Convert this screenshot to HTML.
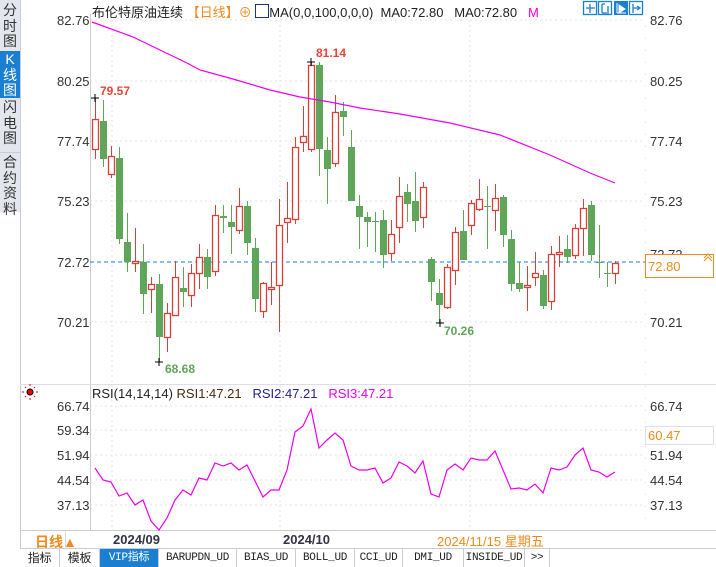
<!DOCTYPE html>
<html><head><meta charset="utf-8"><style>
html,body{margin:0;padding:0;background:#fff;}
body{width:716px;height:566px;position:relative;overflow:hidden;font-family:"Liberation Sans","Noto Sans CJK SC",sans-serif;}
.side{position:absolute;left:0;top:0;width:20px;height:212px;background:#e3e6ec;border-right:1px solid #c8ccd4;}
.side div{position:absolute;left:0;width:20px;text-align:center;font-size:14px;line-height:15.5px;color:#333;}
.side .sel{background:#1a7fd0;color:#fff;}
.lbl{position:absolute;font-size:13px;color:#333;}
.tabs{position:absolute;left:20px;top:548px;height:18px;width:696px;border-top:1px solid #c8ccd4;font-size:11px;}
.tabs span{position:absolute;top:0;height:18px;line-height:18px;text-align:center;border-right:1px solid #c8ccd4;color:#222;font-family:"Liberation Mono","Noto Sans CJK SC",monospace;letter-spacing:-0.3px;}
</style></head><body>
<div class="side">
<div style="top:3px">分<br>时<br>图</div>
<div class="sel" style="top:51px;height:46px;padding-top:1px">K<br>线<br>图</div>
<div style="top:100px">闪<br>电<br>图</div>
<div style="top:152px;border-top:1px solid #c8ccd4;padding-top:2px">合<br>约<br>资<br>料</div>
</div>
<div style="position:absolute;left:20px;top:212px;width:0;height:336px;border-left:1px solid #c8ccd4"></div>
<svg id="s" width="716" height="566" style="position:absolute;left:0;top:0" xmlns="http://www.w3.org/2000/svg">
<g stroke="#e4e4e4" stroke-dasharray="2,3">
<line x1="90" y1="20" x2="645" y2="20"/><line x1="90" y1="81" x2="645" y2="81"/><line x1="90" y1="141" x2="645" y2="141"/><line x1="90" y1="201" x2="645" y2="201"/><line x1="90" y1="322" x2="645" y2="322"/>
<line x1="90" y1="406" x2="645" y2="406"/><line x1="90" y1="430" x2="645" y2="430"/><line x1="90" y1="455" x2="645" y2="455"/><line x1="90" y1="480" x2="645" y2="480"/><line x1="90" y1="505" x2="645" y2="505"/>
<line x1="112" y1="20" x2="112" y2="530"/><line x1="280" y1="20" x2="280" y2="530"/><line x1="470" y1="20" x2="470" y2="530"/>
</g>
<line x1="90.5" y1="14" x2="90.5" y2="530" stroke="#ccc"/>
<line x1="645.5" y1="14" x2="645.5" y2="530" stroke="#ddd" stroke-dasharray="1,11"/>
<line x1="20" y1="384.5" x2="716" y2="384.5" stroke="#dde"/>
<line x1="20" y1="530.5" x2="716" y2="530.5" stroke="#ccc"/>
<line x1="90" y1="262" x2="645" y2="262" stroke="#1a7fe0" stroke-dasharray="4,3"/>
<g id="c"></g>
<polyline fill="none" stroke="#ee00ee" stroke-width="1.2" points="92,22 133,37 160,50 187,63 200,70 233,79 270,90 300,97 330,102 360,108 400,114 450,123 500,135 550,155 590,173 615,183"/>
<polyline id="rsi" fill="none" stroke="#ee00ee" stroke-width="1.2"/>
<g stroke="#000" stroke-width="1"><path d="M91 98h8M95 94v8M155 362h8M159 358v8M307 62h8M311 58v8M436 323h8M440 319v8"/></g>
<g font-size="12" font-weight="bold" font-family="Liberation Sans">
<text x="100" y="95" fill="#e0483a">79.57</text><text x="316" y="57" fill="#e0483a">81.14</text>
<text x="165" y="373" fill="#5fa55a">68.68</text><text x="444" y="335" fill="#5fa55a">70.26</text></g>
<g fill="none" stroke="#1a7fd0" stroke-width="1.3">
<rect x="583.5" y="1.5" width="13" height="13"/><rect x="598.5" y="1.5" width="13" height="13"/><rect x="629.5" y="1.5" width="13" height="13"/>
<path d="M590 4v9M586 8h9M602 4v9M602 4h3M602 13h7M608 6v6M633 4v9M633 8h7M637 6l3 2-3 2"/></g>
<rect x="614" y="1" width="14" height="14" fill="#1a7fd0"/><path d="M617 3v10M617 13h9M619 5l6 4-6 4z" stroke="#fff" fill="#fff"/>
<text x="650" y="259" font-size="13" fill="#333">72.72</text>
<rect x="645.5" y="254.5" width="68" height="23" fill="#fff" stroke="#f08a1c"/>
<text x="648" y="271" font-size="13" fill="#f08a1c">72.80</text>
<path d="M704 258l4-4 4 4M704 261l4-4 4 4" stroke="#f08a1c" fill="none"/>
<rect x="645.5" y="426.5" width="68" height="18" fill="#fff" stroke="#dde"/>
<text x="648" y="440" font-size="13" fill="#f08a1c">60.47</text>
<circle cx="30" cy="392" r="3" fill="#e00" stroke="#000"/><path d="M24 392h-2M36 392h2M30 386v-2M30 398v2M26 388l-1-1M34 388l1-1M26 396l-1 1M34 396l1 1" stroke="#e00"/>
</svg>
<div class="lbl" style="left:92px;top:2px;color:#222">布伦特原油连续 <span style="color:#f08a1c">【日线】</span><span style="color:#f08a1c">⊕</span> <span style="display:inline-block;width:12px;height:12px;border:1px solid #1a3080;vertical-align:-1px"></span>MA(0,0,100,0,0,0) &nbsp;MA0:72.80 &nbsp;&nbsp;MA0:72.80 &nbsp;&nbsp;<span style="color:#ee00ee">M</span></div>
<div class="lbl" style="left:57px;top:13px">82.76</div><div class="lbl" style="left:57px;top:74px">80.25</div><div class="lbl" style="left:57px;top:134px">77.74</div><div class="lbl" style="left:57px;top:194px">75.23</div><div class="lbl" style="left:57px;top:255px">72.72</div><div class="lbl" style="left:57px;top:315px">70.21</div>
<div class="lbl" style="left:650px;top:13px">82.76</div><div class="lbl" style="left:650px;top:74px">80.25</div><div class="lbl" style="left:650px;top:134px">77.74</div><div class="lbl" style="left:650px;top:194px">75.23</div><div class="lbl" style="left:650px;top:315px">70.21</div>
<div class="lbl" style="left:92px;top:386px;color:#222">RSI(14,14,14) <span style="color:#4a2a10">RSI1:47.21</span> &nbsp;&nbsp;<span style="color:#222299">RSI2:47.21</span> &nbsp;&nbsp;<span style="color:#ee00ee">RSI3:47.21</span></div>
<div class="lbl" style="left:57px;top:399px">66.74</div><div class="lbl" style="left:57px;top:423px">59.34</div><div class="lbl" style="left:57px;top:448px">51.94</div><div class="lbl" style="left:57px;top:473px">44.54</div><div class="lbl" style="left:57px;top:498px">37.13</div>
<div class="lbl" style="left:650px;top:399px">66.74</div><div class="lbl" style="left:650px;top:448px">51.94</div><div class="lbl" style="left:650px;top:473px">44.54</div><div class="lbl" style="left:650px;top:498px">37.13</div>
<div class="lbl" style="left:35px;top:532px;color:#f08a1c;font-weight:bold;font-size:14px">日线▲</div>
<div style="position:absolute;left:65px;top:531px;width:0;height:17px;border-left:1px solid #ddd"></div>
<div class="lbl" style="left:113px;top:532px;font-weight:bold;color:#334">2024/09</div>
<div class="lbl" style="left:283px;top:532px;font-weight:bold;color:#334">2024/10</div>
<div class="lbl" style="left:437px;top:531px;color:#f08a1c;font-size:13px">2024/11/15 星期五</div>
<div class="tabs">
<span style="left:0;width:39px;font-family:'Noto Sans CJK SC',sans-serif;font-size:12px">指标</span>
<span style="left:40px;width:39px;font-family:'Noto Sans CJK SC',sans-serif;font-size:12px">模板</span>
<span style="left:80px;width:58px;background:#1a7fd0;color:#fff">VIP指标</span>
<span style="left:139px;width:77px">BARUPDN_UD</span>
<span style="left:217px;width:58px">BIAS_UD</span>
<span style="left:276px;width:58px">BOLL_UD</span>
<span style="left:335px;width:47px">CCI_UD</span>
<span style="left:383px;width:60px">DMI_UD</span>
<span style="left:444px;width:60px">INSIDE_UD</span>
<span style="left:505px;width:24px">&gt;&gt;</span>
</div>
<script>
var C=[[95,'r',119,149,98,159],[103,'g',121,159,100,167],[111,'r',156,174,146,178],[119,'g',158,239,147,244],[127,'g',242,262,213,272],[135,'r',261,263,228,272],[143,'g',262,294,244,314],[151,'r',284,289,277,313],[159,'g',284,337,274,362],[167,'r',313,337,303,352],[175,'r',277,315,261,315],[183,'g',288,292,267,307],[191,'r',273,295,264,307],[199,'r',257,273,244,289],[207,'g',257,277,249,289],[215,'r',215,271,205,276],[223,'g',216,218,205,233],[231,'g',222,227,205,254],[239,'r',206,230,188,234],[247,'g',206,243,201,255],[255,'g',248,299,238,312],[263,'r',283,311,282,318],[271,'r',287,289,262,305],[279,'r',225,285,199,332],[287,'r',218,222,182,243],[295,'r',147,219,137,224],[303,'r',136,142,106,152],[311,'r',65,149,62,152],[319,'g',65,149,62,176],[327,'g',150,169,137,204],[335,'r',112,163,95,167],[343,'g',111,117,102,136],[351,'g',147,201,130,201],[359,'g',206,217,195,249],[367,'g',217,222,212,247],[375,'g',221,222,212,252],[383,'g',220,255,210,268],[391,'r',234,253,220,261],[399,'r',196,227,177,243],[407,'g',192,204,184,222],[415,'g',201,221,172,232],[423,'r',187,217,182,228],[431,'g',259,282,257,301],[439,'g',293,305,279,323],[447,'r',267,307,264,309],[455,'r',232,270,227,285],[463,'g',231,260,210,260],[471,'r',203,225,200,235],[479,'r',199,209,179,211],[487,'g',206,207,186,249],[495,'r',198,210,184,231],[503,'g',197,235,195,247],[511,'g',239,284,230,291],[519,'g',283,289,262,292],[527,'r',285,287,266,311],[535,'r',273,277,252,286],[543,'g',275,306,270,309],[551,'r',254,301,246,310],[559,'r',252,254,236,267],[567,'g',249,257,235,263],[575,'r',228,255,224,259],[583,'r',208,228,199,256],[591,'g',205,255,201,261],[599,'g',262,263,225,278],[607,'g',273,274,262,287],[615,'r',263,273,261,284]];
var h='';C.forEach(function(c){var col=c[1]=='r'?'#d9403a':'#5fa55a',x=c[0];
h+='<line x1="'+(x+.5)+'" y1="'+c[4]+'" x2="'+(x+.5)+'" y2="'+c[2]+'" stroke="'+col+'"/>';
h+='<line x1="'+(x+.5)+'" y1="'+c[3]+'" x2="'+(x+.5)+'" y2="'+c[5]+'" stroke="'+col+'"/>';
var hh=Math.max(c[3]-c[2],1);
if(c[1]=='r')h+='<rect x="'+(x-2.5)+'" y="'+(c[2]+.5)+'" width="6" height="'+hh+'" fill="#fff" stroke="'+col+'" stroke-width="1.3"/>';
else h+='<rect x="'+(x-3)+'" y="'+c[2]+'" width="7" height="'+hh+'" fill="'+col+'"/>';});
document.getElementById('c').innerHTML=h;
document.getElementById('rsi').setAttribute('points','95,468 103,480 111,482 119,496 127,493 135,505 143,500 151,521 159,530 167,518 175,500 183,490 191,495 199,478 207,480 215,463 223,466 231,463 239,470 247,465 255,481 263,497 271,490 279,490 287,470 295,432 303,426 311,409 319,448 327,440 335,433 343,440 351,466 359,470 367,470 375,468 383,483 391,478 399,462 407,466 415,473 423,461 431,494 439,497 447,470 455,464 463,470 471,458 479,460 487,460 495,451 503,470 511,489 519,488 527,490 535,484 543,493 551,468 559,470 567,467 575,455 583,448 591,470 599,472 607,477 615,472');
</script>
</body></html>
